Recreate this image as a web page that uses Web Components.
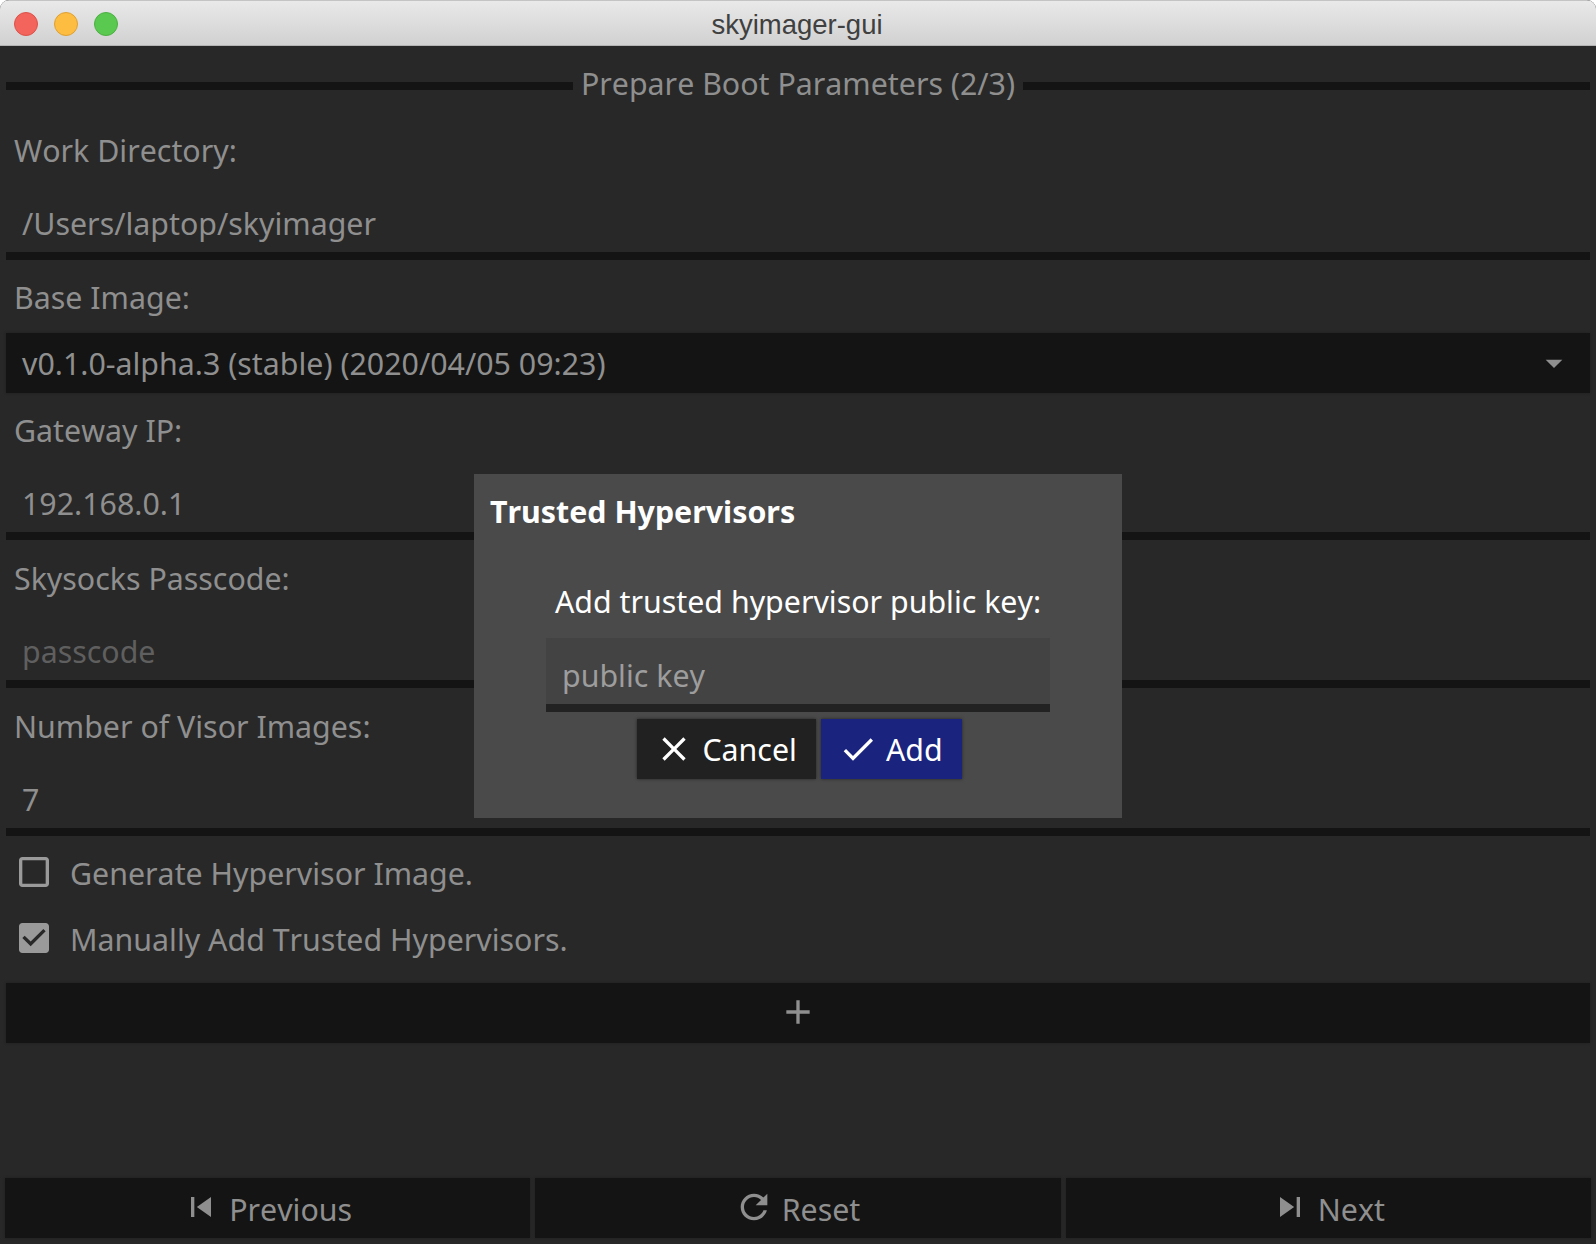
<!DOCTYPE html>
<html><head><meta charset="utf-8"><style>
html,body{margin:0;padding:0;background:#fff}
body{font-family:"Noto Sans",sans-serif;font-size:30.35px;font-kerning:none;color:#8f8f8f;width:1596px;height:1244px;overflow:hidden}
</style></head><body>
<sk-window>
  <sk-heading slot="top">Prepare Boot Parameters (2/3)</sk-heading>
  <sk-label>Work Directory:</sk-label>
  <sk-entry>/Users/laptop/skyimager</sk-entry>
  <sk-label tight>Base Image:</sk-label>
  <sk-select>v0.1.0-alpha.3 (stable) (2020/04/05 09:23)</sk-select>
  <sk-label tight>Gateway IP:</sk-label>
  <sk-entry>192.168.0.1</sk-entry>
  <sk-label>Skysocks Passcode:</sk-label>
  <sk-entry placeholder>passcode</sk-entry>
  <sk-label>Number of Visor Images:</sk-label>
  <sk-entry>7</sk-entry>
  <sk-check>Generate Hypervisor Image.</sk-check>
  <sk-check checked>Manually Add Trusted Hypervisors.</sk-check>
  <sk-bar icon="add"></sk-bar>
  <sk-footer slot="bottom">
    <sk-bar flat icon="prev">Previous</sk-bar>
    <sk-bar flat icon="reset">Reset</sk-bar>
    <sk-bar flat icon="next">Next</sk-bar>
  </sk-footer>
  <sk-modal slot="overlay" heading="Trusted Hypervisors"></sk-modal>
</sk-window>
<script>
const ICONS={
 add:'M19 13h-6v6h-2v-6H5v-2h6V5h2v6h6v2z',
 prev:'M6 6h2v12H6zm3.5 6l8.5 6V6z',
 next:'M6 18l8.5-6L6 6v12zM16 6v12h2V6h-2z',
 reset:'M17.65 6.35C16.2 4.9 14.21 4 12 4c-4.42 0-7.99 3.58-7.99 8s3.57 8 7.99 8c3.73 0 6.84-2.55 7.73-6h-2.08c-.82 2.33-3.04 4-5.65 4-3.31 0-6-2.69-6-6s2.69-6 6-6c1.66 0 3.14.69 4.22 1.78L13 11h7V4l-2.35 2.35z',
 close:'M19 6.41L17.59 5 12 10.59 6.41 5 5 6.41 10.59 12 5 17.59 6.41 19 12 13.41 17.59 19 19 17.59 13.41 12z',
 check:'M9 16.17L4.83 12l-1.42 1.41L9 19 21 7l-1.41-1.41z',
 box:'M19 5v14H5V5h14m0-2H5c-1.1 0-2 .9-2 2v14c0 1.1.9 2 2 2h14c1.1 0 2-.9 2-2V5c0-1.1-.9-2-2-2z',
 boxOn:'M19 3H5c-1.11 0-2 .9-2 2v14c0 1.1.89 2 2 2h14c1.11 0 2-.9 2-2V5c0-1.1-.89-2-2-2zm-9 14l-5-5 1.41-1.41L10 14.17l7.59-7.59L19 8l-9 9z',
 drop:'M7 10l5 5 5-5z'
};
const svg=(n,s=40)=>`<svg width="${s}" height="${s}" viewBox="0 0 24 24" fill="currentColor" aria-hidden="true"><path d="${ICONS[n]}"/></svg>`;
class Base extends HTMLElement{
  constructor(){super();this.attachShadow({mode:'open'})}
  connectedCallback(){this.shadowRoot.innerHTML=this.markup()}
}
customElements.define('sk-window',class extends Base{markup(){return `<style>
:host{display:block;position:relative;width:1596px;height:1244px;overflow:hidden}
.frame{display:flex;flex-direction:column;height:100%;background:#282828;border-radius:9px 9px 0 0;overflow:hidden}
.tb{flex:none;box-sizing:border-box;height:46px;position:relative;display:flex;align-items:center;justify-content:center;
 background:linear-gradient(#e9e9e9,#d1d1d1);border-top:1px solid #c4c4c4;border-bottom:1px solid #b4b4b4;color:#404040;
 font:27.5px/1 "Liberation Sans",sans-serif;padding:3px 2px 0 0}
.lights{position:absolute;left:14px;top:11px;display:flex;gap:16px}
.lights i{display:block;width:24px;height:24px;border-radius:50%;box-sizing:border-box}
.r{background:#f2645c;border:1px solid #dc524a}.y{background:#fcbd41;border:1px solid #dfa033}.g{background:#5ac94f;border:1px solid #4cb043}
.main{flex:1;display:flex;flex-direction:column;padding:0 6px;min-height:0}
.fill{flex:1}
</style><div class="frame"><div class="tb"><div class="lights"><i class="r"></i><i class="y"></i><i class="g"></i></div>skyimager-gui</div>
<div class="main"><slot name="top"></slot><slot></slot><div class="fill"></div></div><slot name="bottom"></slot></div><slot name="overlay"></slot>`}});
customElements.define('sk-heading',class extends Base{markup(){return `<style>
:host{display:flex;align-items:center;gap:8px;height:66px;color:#8f8f8f}
i{flex:1;height:8px;background:#141414;margin-top:14px}
span{line-height:66px;padding-top:10px}
</style><i></i><span><slot></slot></span><i></i>`}});
customElements.define('sk-label',class extends Base{markup(){const t=this.hasAttribute('tight');return `<style>
:host{display:block;box-sizing:border-box;height:${t?73:74}px;padding:3px 0 0 8px;line-height:${t?70:71}px;color:#8f8f8f}
</style><slot></slot>`}});
customElements.define('sk-entry',class extends Base{markup(){const p=this.hasAttribute('placeholder');return `<style>
:host{display:block;box-sizing:border-box;height:74px;border-bottom:8px solid #141414;padding:5px 0 0 16px;line-height:66px;color:${p?'#5f5f5f':'#8f8f8f'}}
</style><slot></slot>`}});
customElements.define('sk-select',class extends Base{markup(){return `<style>
:host{display:flex;flex:none;align-items:center;justify-content:space-between;height:60px;background:#141414;padding:0 16px;color:#8f8f8f;box-shadow:0 0 3px rgba(0,0,0,.25)}
span{line-height:60px;padding-top:2px}
svg{color:#8f8f8f;flex:none}
</style><span><slot></slot></span>${svg('drop')}`}});
customElements.define('sk-check',class extends Base{markup(){const c=this.hasAttribute('checked');return `<style>
:host{display:flex;flex:none;align-items:center;gap:16px;height:66px;padding:6px 0 0 8px;box-sizing:border-box;color:#8f8f8f}
svg{flex:none;color:#9a9a9a}
span{padding-top:2px}
</style>${svg(c?'boxOn':'box')}<span><slot></slot></span>`}});
customElements.define('sk-bar',class extends Base{markup(){const f=this.hasAttribute('flat');const i=this.getAttribute('icon');return `<style>
:host{display:flex;box-sizing:border-box;${f?'flex:1 1 0;padding-right:2px;':'flex:none;margin-top:15px;'}align-items:center;justify-content:center;gap:8px;height:60px;background:#141414;color:#8f8f8f;box-shadow:0 0 3px rgba(0,0,0,.25)}
svg{flex:none;color:#8f8f8f;position:relative;top:-1px}
span{line-height:60px;padding-top:3px}
</style>${svg(i)}${f?'<span><slot></slot></span>':''}`}});
customElements.define('sk-footer',class extends Base{markup(){return `<style>
:host{display:flex;gap:5px;padding:0 5px 6px;flex:none}
</style><slot></slot>`}});
customElements.define('sk-button',class extends Base{markup(){const pr=this.hasAttribute('primary');return `<style>
:host{display:flex;align-items:center;gap:8px;height:60px;box-sizing:border-box;padding:0 19px 0 17px;background:${pr?'#1a237e':'#212121'};color:#fff;box-shadow:0 0 3px rgba(0,0,0,.5)}
svg{flex:none}
span{line-height:60px;padding-top:2px}
</style>${svg(this.getAttribute('icon'))}<span><slot></slot></span>`}});
customElements.define('sk-modal',class extends Base{markup(){return `<style>
:host{position:absolute;left:474px;top:474px;width:648px;height:344px;box-sizing:border-box;background:#4a4a4a;color:#fff;display:flex;flex-direction:column;padding:0 16px}
.t{font-weight:700;height:76px;line-height:76px}
.m{text-align:center;height:88px}
.m span{display:block;padding-top:12px;line-height:80px}
.i{box-sizing:border-box;align-self:center;width:504px;height:74px;background:#434343;border-bottom:8px solid #222;padding:1px 0 0 16px;line-height:73px;color:#9d9d9d}
.b{display:flex;justify-content:center;gap:5px;margin-top:7px;padding-left:3px}
</style><div class="t">${this.getAttribute('heading')}</div><div class="m"><span>Add trusted hypervisor public key:</span></div><div class="i">public key</div><div class="b"><sk-button icon="close">Cancel</sk-button><sk-button primary icon="check">Add</sk-button></div>`}});
</script>
</body></html>
